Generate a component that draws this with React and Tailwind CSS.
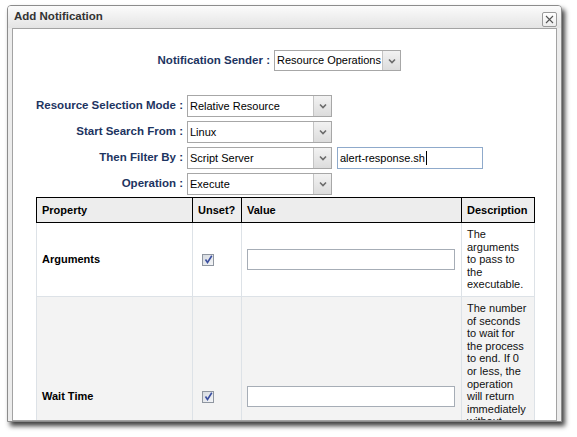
import React from "react";

const font = "font-['Liberation_Sans',Arial,sans-serif]";

function Select({ value, width, height = "h-[22px]" }) {
	return (
		<div
			className={`${width} ${height} flex items-stretch border border-[#a7a7a7] bg-white`}
		>
			<div className="flex-1 flex items-center pl-[2px] text-[11px] text-black truncate">
				{value}
			</div>
			<div className="w-[18px] flex items-center justify-center border-l border-[#c4c4c4] bg-gradient-to-b from-[#f2f2f2] to-[#dcdcdc]">
				<svg width="8" height="6" viewBox="0 0 8 6">
					<path d="M1 1.5 L4 4.5 L7 1.5" fill="none" stroke="#6b6b6b" strokeWidth="1.6" />
				</svg>
			</div>
		</div>
	);
}

function Checkbox() {
	return (
		<span className="inline-flex w-[12px] h-[12px] items-center justify-center border border-[#8f96a0] bg-gradient-to-br from-[#d6dae0] to-[#f4f5f7]">
			<svg width="9" height="9" viewBox="0 0 9 9">
				<path d="M1.5 4.5 L3.5 7.5 L7.8 0.8" fill="none" stroke="#3b4fa0" strokeWidth="1.6" />
			</svg>
		</span>
	);
}

export default function App() {
	const rows = [
		{
			name: "Arguments",
			bg: "bg-white",
			h: "h-[74px]",
			desc: "The arguments to pass to the executable.",
		},
		{
			name: "Wait Time",
			bg: "bg-[#f3f3f3]",
			h: "h-[200px]",
			desc: "The number of seconds to wait for the process to end. If 0 or less, the operation will return immediately without waiting for the process to end.",
		},
	];

	return (
		<div className={`w-[577px] h-[437px] bg-white pt-[5px] pl-[7px] ${font}`}>
			{/* window */}
			<div className="w-[555px] h-[417px] flex flex-col border border-[#8c8c8c] rounded-t-[4px] bg-[#ececec] overflow-hidden shadow-[3px_4px_5px_rgba(0,0,0,0.75)]">
				{/* title bar */}
				<div className="h-[22px] shrink-0 flex items-center justify-between pl-[6px] pr-[4px] bg-gradient-to-b from-[#fbfbfb] to-[#e4e4e4]">
					<span className="text-[11.5px] font-bold text-[#333333]">Add Notification</span>
					<span className="w-[15px] h-[15px] mt-[4px] flex items-center justify-center border border-[#9a9a9a] rounded-[2px] bg-gradient-to-b from-white to-[#ececec]">
						<svg width="9" height="9" viewBox="0 0 9 9">
							<path d="M1 1 L8 8 M8 1 L1 8" stroke="#555" strokeWidth="1.1" />
						</svg>
					</span>
				</div>

				{/* panel */}
				<div className="flex-1 ml-[4px] mr-[4px] border border-[#a3a3a3] bg-white overflow-hidden">
					{/* sender */}
					<div className="flex items-center gap-[4px] mt-[21px]">
						<div className="w-[257px] text-right text-[11.5px] font-bold text-[#1d3461]">
							Notification Sender :
						</div>
						<Select value="Resource Operations" width="w-[127px]" height="h-[21px]" />
					</div>

					{/* resource selection */}
					<div className="flex flex-col gap-[4px] mt-[24px]">
						{[
							["Resource Selection Mode :", "Relative Resource"],
							["Start Search From :", "Linux"],
							["Then Filter By :", "Script Server"],
							["Operation :", "Execute"],
						].map(([label, value]) => (
							<div key={label} className="flex items-center gap-[4px]">
								<div className="w-[170px] text-right text-[11.5px] font-bold text-[#1d3461]">
									{label}
								</div>
								<Select value={value} width="w-[145px]" />
								{label === "Then Filter By :" && (
									<div className="ml-[1px] w-[146px] h-[22px] flex items-center border border-[#8faacb] pl-[2px] text-[11px] text-black">
										alert-response.sh
										<span className="w-px h-[14px] bg-black ml-px" />
									</div>
								)}
							</div>
						))}
					</div>

					{/* properties table */}
					<table className="ml-[23px] mt-[2px] w-[498px] table-fixed border-collapse border border-[#9a9a9a] text-[11px]">
						<colgroup>
							<col className="w-[156px]" />
							<col className="w-[49px]" />
							<col className="w-[220px]" />
							<col className="w-[73px]" />
						</colgroup>
						<thead>
							<tr className="h-[25px] bg-[#ededed]">
								{["Property", "Unset?", "Value", "Description"].map((h) => (
									<th
										key={h}
										className="border border-black px-[5px] text-left font-bold text-black"
									>
										{h}
									</th>
								))}
							</tr>
						</thead>
						<tbody>
							{rows.map((r) => (
								<tr key={r.name} className={`${r.h} ${r.bg}`}>
									<td className="border border-[#dde2e7] px-[5px] font-bold text-black">
										{r.name}
									</td>
									<td className="border border-[#dde2e7] pl-[9px]">
										<div className="flex">
											<Checkbox />
										</div>
									</td>
									<td className="border border-[#dde2e7] pl-[5px] pr-[6px]">
										<div className="h-[21px] border border-[#a6adb6] bg-white" />
									</td>
									<td className="border border-[#dde2e7] align-top px-[5px] pt-[5px] leading-[12.6px] text-[#111]">
										{r.desc}
									</td>
								</tr>
							))}
						</tbody>
					</table>
				</div>
			</div>
		</div>
	);
}
